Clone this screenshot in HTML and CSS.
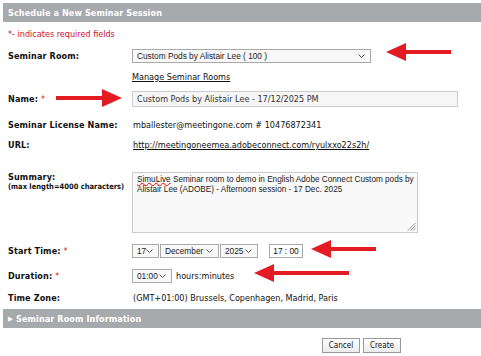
FILE: index.html
```html
<!DOCTYPE html>
<html>
<head>
<meta charset="utf-8">
<link rel="stylesheet" href="styles.css">
</head>
<body>
<div class="page">
  <div class="bar hdr">Schedule a New Seminar Session</div>
  <div class="row r-req"><span class="req">*- indicates required fields</span></div>
  <div class="row r-room">
    <div class="lbl">Seminar Room:</div>
    <div class="sel sel-room"><span>Custom Pods by Alistair Lee ( 100 )</span><svg class="chev" width="7" height="4" viewBox="0 0 7 4"><path d="M0.5 0.5 L3.5 3.5 L6.5 0.5" fill="none" stroke="#555" stroke-width="1"/></svg></div>
  </div>
  <div class="row r-manage">
    <div class="lbl"></div>
    <a class="link" href="#">Manage Seminar Rooms</a>
  </div>
  <div class="row r-name">
    <div class="lbl">Name: <span class="star">*</span></div>
    <div class="inp">Custom Pods by Alistair Lee - 17/12/2025 PM</div>
  </div>
  <div class="row r-lic">
    <div class="lbl">Seminar License Name:</div>
    <div class="val">mballester@meetingone.com # 10476872341</div>
  </div>
  <div class="row r-url">
    <div class="lbl">URL:</div>
    <a class="link val" href="#">http://meetingoneemea.adobeconnect.com/ryulxxo22s2h/</a>
  </div>
  <div class="row r-sum">
    <div class="lbl">Summary:<div class="small">(max length=4000 characters)</div></div>
    <div class="ta"><span class="sp">SimuLive</span> Seminar room to demo in English Adobe Connect Custom pods by Alistair Lee (ADOBE) - Afternoon session - 17 Dec. 2025<svg class="grip" width="9" height="9" viewBox="0 0 9 9"><path d="M8.5 1 L1 8.5 M8.5 3.5 L3.5 8.5 M8.5 6 L6 8.5" stroke="#999" stroke-width="1"/></svg></div>
  </div>
  <div class="row r-start">
    <div class="lbl">Start Time: <span class="star">*</span></div>
    <div class="sel sel-d"><span>17</span><svg class="chev" width="7" height="4" viewBox="0 0 7 4"><path d="M0.5 0.5 L3.5 3.5 L6.5 0.5" fill="none" stroke="#555" stroke-width="1"/></svg></div>
    <div class="sel sel-m"><span>December</span><svg class="chev" width="7" height="4" viewBox="0 0 7 4"><path d="M0.5 0.5 L3.5 3.5 L6.5 0.5" fill="none" stroke="#555" stroke-width="1"/></svg></div>
    <div class="sel sel-y"><span>2025</span><svg class="chev" width="7" height="4" viewBox="0 0 7 4"><path d="M0.5 0.5 L3.5 3.5 L6.5 0.5" fill="none" stroke="#555" stroke-width="1"/></svg></div>
    <div class="time">17 : 00</div>
  </div>
  <div class="row r-dur">
    <div class="lbl">Duration: <span class="star">*</span></div>
    <div class="sel sel-dur"><span>01:00</span><svg class="chev" width="7" height="4" viewBox="0 0 7 4"><path d="M0.5 0.5 L3.5 3.5 L6.5 0.5" fill="none" stroke="#555" stroke-width="1"/></svg></div>
    <span class="hm">hours:minutes</span>
  </div>
  <div class="row r-tz">
    <div class="lbl">Time Zone:</div>
    <div class="val">(GMT+01:00) Brussels, Copenhagen, Madrid, Paris</div>
  </div>
  <div class="bar info"><span class="tri">&#9654;</span>Seminar Room Information</div>
  <div class="btns">
    <button class="btn btn-cancel">Cancel</button>
    <button class="btn btn-create">Create</button>
  </div>

  <svg class="arrow a1" width="66" height="20" viewBox="0 0 66 20"><path d="M0 10 L20 1 L20 8 L65 8 L65 12 L20 12 L20 19 Z" fill="#e31b23"/></svg>
  <svg class="arrow a2" width="66" height="20" viewBox="0 0 66 20"><path d="M66 10 L46 1 L46 8 L0 8 L0 12 L46 12 L46 19 Z" fill="#e31b23"/></svg>
  <svg class="arrow a3" width="66" height="20" viewBox="0 0 66 20"><path d="M0 10 L20 1 L20 8 L65 8 L65 12 L20 12 L20 19 Z" fill="#e31b23"/></svg>
  <svg class="arrow a4" width="96" height="20" viewBox="0 0 96 20"><path d="M0 10 L20 1 L20 8 L95 8 L95 12 L20 12 L20 19 Z" fill="#e31b23"/></svg>
</div>
</body>
</html>
```

FILE: styles.css
```css
html, body {
  margin: 0;
  padding: 0;
  background: #fff;
}
body {
  font-family: "DejaVu Sans Condensed", "DejaVu Sans", Verdana, sans-serif;
  font-size: 9px;
  color: #111;
}
.page {
  position: relative;
  padding: 3px 0 0 3px;
  width: 478px;
  height: 353px;
}
.bar {
  background: #a7aaad;
  color: #fff;
  font-weight: bold;
  letter-spacing: 0.1px;
  display: flex;
  align-items: center;
  padding-left: 5px;
}
.hdr {
  height: 19px;
}
.row {
  display: flex;
  align-items: center;
  padding-left: 5px;
}
.lbl {
  width: 124px;
  flex: none;
  font-weight: bold;
  letter-spacing: 0.12px;
}
.star {
  color: #d11;
  font-weight: normal;
}
.req {
  color: #c8102e;
}
.r-req { height: 23px; }
.r-room { height: 22px; }
.r-manage { height: 20px; }
.r-name { height: 24px; }
.r-lic { height: 28px; }
.r-url { height: 12px; }
.r-sum {
  align-items: flex-start;
  padding-top: 21px;
  height: 68px;
}
.r-start { height: 22px; }
.r-dur { height: 28px; }
.r-tz { height: 16px; }
.link {
  color: #111;
  text-decoration: underline;
}
.val {
  margin-left: 1px;
}
.sel {
  display: flex;
  align-items: center;
  justify-content: space-between;
  box-sizing: border-box;
  height: 14px;
  border: 1px solid #a9a9a9;
  background: #f8f8f8;
  font-family: "Liberation Sans", Arial, sans-serif;
  font-size: 8.3px;
  padding: 0 5px 0 4px;
  color: #222;
}
.chev { flex: none; }
.sel-room { width: 239px; }
.inp {
  box-sizing: border-box;
  width: 326px;
  height: 16px;
  border: 1px solid #ccc;
  background: #f6f6f6;
  padding-left: 4px;
  display: flex;
  align-items: center;
  color: #333;
}
.lbl .small {
  font-size: 7.5px;
  letter-spacing: 0;
  white-space: nowrap;
}
.ta {
  position: relative;
  box-sizing: border-box;
  width: 286px;
  height: 61px;
  border: 1px solid #ccc;
  background: #f9f9f9;
  font-family: "Liberation Sans", Arial, sans-serif;
  font-size: 8.2px;
  line-height: 10px;
  padding: 2px 1px 2px 4px;
  color: #222;
}
.sp {
  text-decoration: underline wavy #e00;
  text-decoration-thickness: 1px;
  text-underline-offset: 0px;
}
.grip {
  position: absolute;
  right: 1px;
  bottom: 1px;
}
.sel-d { width: 27px; }
.sel-m { width: 59px; margin-left: 1px; }
.sel-y { width: 38px; margin-left: 1px; }
.time {
  box-sizing: border-box;
  margin-left: 11px;
  width: 34px;
  height: 14px;
  border: 1px solid #a9a9a9;
  font-family: "Liberation Sans", Arial, sans-serif;
  font-size: 8.3px;
  display: flex;
  align-items: center;
  justify-content: center;
}
.sel-dur { width: 40px; }
.hm { margin-left: 4px; }
.info {
  margin-top: 3px;
  height: 19px;
}
.tri {
  font-size: 7px;
  margin-right: 3px;
}
.btns {
  display: flex;
  justify-content: flex-start;
  gap: 3px;
  margin-top: 10px;
  padding-left: 319px;
}
.btn {
  box-sizing: border-box;
  height: 15px;
  border: 1px solid #999;
  background: linear-gradient(#fff, #ececec);
  font-family: "DejaVu Sans Condensed", "DejaVu Sans", Verdana, sans-serif;
  font-size: 8px;
  color: #111;
  padding: 0;
}
.btn-cancel { width: 38px; }
.btn-create { width: 38px; }
.arrow {
  position: absolute;
}
.a1 { left: 386px; top: 42px; }
.a2 { left: 56px; top: 88px; }
.a3 { left: 311px; top: 239px; }
.a4 { left: 254px; top: 263px; }
```
